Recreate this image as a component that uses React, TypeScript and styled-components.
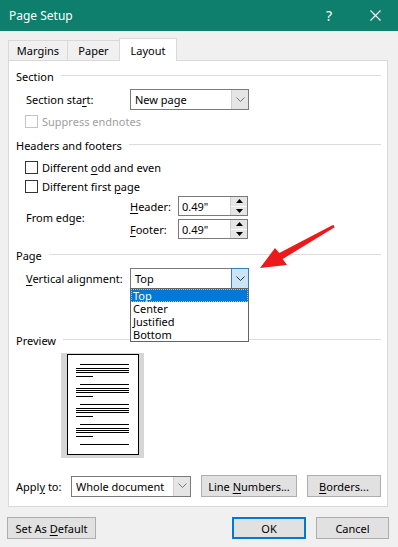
import React from 'react';
import styled, { createGlobalStyle, css } from 'styled-components';

const GlobalStyle = createGlobalStyle`
	html, body {
		margin: 0;
		padding: 0;
		background: #f0f0f0;
	}

	body {
		font-family: 'Noto Sans', 'Segoe UI', sans-serif;
		font-size: 11px;
		color: #000;
	}
`;

const Window = styled.div`
	position: relative;
	width: 398px;
	height: 547px;
	background: #f0f0f0;
	overflow: hidden;
	display: flex;
	flex-direction: column;
`;

const TitleBar = styled.div`
	height: 31px;
	flex: 0 0 31px;
	display: flex;
	align-items: center;
	padding-left: 9px;
	background: #0e7f6d;
	color: #fff;
	font-size: 12px;
`;

const Title = styled.div`
	flex: 1;
`;

const TitleButton = styled.div`
	width: 46px;
	height: 31px;
	display: flex;
	align-items: center;
	justify-content: center;
	font-size: 14px;
`;

const Body = styled.div`
	display: flex;
	flex-direction: column;
	padding: 7px 10px 0 8px;
`;

const Tabs = styled.div`
	display: flex;
	align-items: flex-end;
	height: 23px;
	margin-bottom: -1px;
	position: relative;
	z-index: 1;
`;

const Tab = styled.div<{ $active?: boolean; $width: number }>`
	box-sizing: border-box;
	width: ${(p) => p.$width}px;
	display: flex;
	align-items: center;
	justify-content: center;
	border: 1px solid #d9d9d9;
	border-bottom: none;
	& + & {
		margin-left: -1px;
	}

	${(p) => p.$active
		? css`
			height: 23px;
			background: #fff;
			padding-top: 1px;
		`
		: css`
			height: 21px;
			background: #f0f0f0;
			border-bottom: 1px solid #d9d9d9;
		`}
`;

const Panel = styled.div`
	display: flex;
	flex-direction: column;
	background: #fff;
	border: 1px solid #d9d9d9;
	padding: 0 6px 9px 7px;
`;

const GroupHeader = styled.div<{ $mt: number }>`
	display: flex;
	align-items: center;
	gap: 7px;
	height: 14px;
	margin-top: ${(p) => p.$mt}px;

	&::after {
		content: '';
		flex: 1;
		height: 1px;
		margin-top: -1px;
		background: #dcdcdc;
	}
`;

const Row = styled.div<{ $mt: number; $indent?: number; $height?: number }>`
	display: flex;
	align-items: center;
	height: ${(p) => p.$height ?? 21}px;
	margin-top: ${(p) => p.$mt}px;
	padding-left: ${(p) => p.$indent ?? 10}px;
`;

const Label = styled.div<{ $width: number }>`
	width: ${(p) => p.$width}px;
	flex: 0 0 auto;
	white-space: nowrap;
`;

const U = styled.span`
	text-decoration: underline;
	text-underline-offset: 2px;
`;

const CheckRow = styled.label<{ $mt: number; $disabled?: boolean }>`
	display: flex;
	align-items: center;
	gap: 4px;
	height: 13px;
	margin-top: ${(p) => p.$mt}px;
	padding-left: 9px;
	color: ${(p) => (p.$disabled ? '#a0a0a0' : '#000')};
`;

const CheckBox = styled.span<{ $disabled?: boolean }>`
	box-sizing: border-box;
	width: 13px;
	height: 13px;
	background: #fff;
	border: 1px solid ${(p) => (p.$disabled ? '#c4c4c4' : '#333')};
`;

const Combo = styled.div<{ $width: number }>`
	position: relative;
	box-sizing: border-box;
	width: ${(p) => p.$width}px;
	height: 21px;
	display: flex;
	background: #fff;
	border: 1px solid #7a7a7a;
`;

const ComboText = styled.div`
	flex: 1;
	display: flex;
	align-items: center;
	padding-left: 4px;
	white-space: nowrap;
`;

const ComboButton = styled.div<{ $focused?: boolean }>`
	box-sizing: border-box;
	width: 17px;
	display: flex;
	align-items: center;
	justify-content: center;
	color: ${(p) => (p.$focused ? '#333' : '#777')};

	${(p) => p.$focused
		? css`
			background: #cce4f7;
			border: 1px solid #3c7fb1;
			margin: -1px -1px -1px 0;
			width: 18px;
		`
		: css`
			background: #e5e5e5;
			border-left: 1px solid #cfcfcf;
		`}
`;

const DropList = styled.div`
	position: absolute;
	top: 100%;
	left: -1px;
	width: 119px;
	box-sizing: border-box;
	background: #fff;
	border: 1px solid #646464;
	z-index: 3;
`;

const DropItem = styled.div<{ $selected?: boolean }>`
	box-sizing: border-box;
	height: 13px;
	line-height: 13px;
	padding-left: 2px;
	overflow: hidden;

	${(p) => p.$selected && css`
		background: #0078d7;
		color: #fff;
		outline: 1px dotted #9cc8ee;
		outline-offset: -1px;
	`}
`;

const EdgeGrid = styled.div`
	display: grid;
	grid-template-columns: 104px 48px 70px;
	grid-template-rows: 20px 20px;
	row-gap: 3px;
	align-items: center;
	margin-top: 3px;
	padding-left: 10px;
`;

const EdgeLabel = styled.div`
	grid-row: 1 / span 2;
`;

const Spin = styled.div`
	box-sizing: border-box;
	width: 70px;
	height: 20px;
	display: flex;
	background: #fff;
	border: 1px solid #7a7a7a;
`;

const SpinText = styled.div`
	flex: 1;
	display: flex;
	align-items: center;
	padding-left: 3px;
`;

const SpinButtons = styled.div`
	width: 16px;
	display: flex;
	flex-direction: column;
	border-left: 1px solid #cfcfcf;
`;

const SpinHalf = styled.div`
	flex: 1;
	display: flex;
	align-items: center;
	justify-content: center;
	background: #e5e5e5;

	& + & {
		border-top: 1px solid #fff;
	}
`;

const PreviewBox = styled.div`
	box-sizing: border-box;
	width: 83px;
	height: 105px;
	margin: 6px 0 0 45px;
	padding: 1px 5px 0 6px;
	background: #d6d6d6;
`;

const PreviewPage = styled.div`
	box-sizing: border-box;
	width: 72px;
	height: 101px;
	background: #fff;
	border: 1px solid #000;
`;

const PushButton = styled.div<{ $width: number; $primary?: boolean }>`
	box-sizing: border-box;
	width: ${(p) => p.$width}px;
	height: 22px;
	display: flex;
	align-items: center;
	justify-content: center;
	white-space: pre;
	background: #e1e1e1;
	border: ${(p) => (p.$primary ? '2px solid #0078d7' : '1px solid #adadad')};
`;

const ApplyRow = styled.div`
	display: flex;
	align-items: center;
	gap: 10px;
	margin-top: 17px;
`;

const Footer = styled.div`
	display: flex;
	align-items: center;
	gap: 10px;
	margin: 10px -1px 0 -1px;
`;

const Spacer = styled.div`
	flex: 1;
`;

const ArrowOverlay = styled.svg`
	position: absolute;
	left: 255px;
	top: 220px;
	z-index: 5;
`;

const Chevron = () => (
	<svg width="9" height="6" viewBox="0 0 9 6">
		<polyline points="0.5,0.5 4.5,4.5 8.5,0.5" fill="none" stroke="currentColor" strokeWidth="1" />
	</svg>
);

const Triangle = ({ up }: { up?: boolean }) => (
	<svg width="7" height="4" viewBox="0 0 7 4">
		<polygon points={up ? '3.5,0 7,4 0,4' : '0,0 7,0 3.5,4'} fill="#000" />
	</svg>
);

const PageLines = () => {
	const groups = [0, 20, 40, 60];

	return (
		<svg width="70" height="99" viewBox="0 0 70 99">
			{groups.map((g) => (
				<g key={g} fill="#000">
					<rect x="12" y={9 + g} width="49" height="1" />
					<rect x="8" y={13 + g} width="53" height="1" />
					<rect x="8" y={15 + g} width="53" height="1" />
					<rect x="8" y={17 + g} width="53" height="1" />
					<rect x="8" y={21 + g} width="17" height="1" />
				</g>
			))}
			<rect x="12" y="89" width="49" height="1" fill="#000" />
		</svg>
	);
};

const App = () => {
	const alignments = ['Top', 'Center', 'Justified', 'Bottom'];

	return (
		<Window>
			<GlobalStyle />
			<TitleBar>
				<Title>Page Setup</Title>
				<TitleButton>?</TitleButton>
				<TitleButton>
					<svg width="11" height="11" viewBox="0 0 11 11">
						<path d="M0.5 0.5 L10.5 10.5 M10.5 0.5 L0.5 10.5" stroke="#fff" strokeWidth="1.1" />
					</svg>
				</TitleButton>
			</TitleBar>

			<Body>
				<Tabs>
					<Tab $width={60}>Margins</Tab>
					<Tab $width={53}>Paper</Tab>
					<Tab $width={58} $active>Layout</Tab>
				</Tabs>

				<Panel>
					<GroupHeader $mt={8}>Section</GroupHeader>
					<Row $mt={6}>
						<Label $width={104}>Section sta<U>r</U>t:</Label>
						<Combo $width={119}>
							<ComboText>New page</ComboText>
							<ComboButton><Chevron /></ComboButton>
						</Combo>
					</Row>
					<CheckRow $mt={5} $disabled>
						<CheckBox $disabled />
						Suppress endnotes
					</CheckRow>

					<GroupHeader $mt={10}>Headers and footers</GroupHeader>
					<CheckRow $mt={9}>
						<CheckBox />
						<span>Different <U>o</U>dd and even</span>
					</CheckRow>
					<CheckRow $mt={6}>
						<CheckBox />
						<span>Different first <U>p</U>age</span>
					</CheckRow>
					<EdgeGrid>
						<EdgeLabel>From edge:</EdgeLabel>
						<div><U>H</U>eader:</div>
						<Spin>
							<SpinText>0.49"</SpinText>
							<SpinButtons>
								<SpinHalf><Triangle up /></SpinHalf>
								<SpinHalf><Triangle /></SpinHalf>
							</SpinButtons>
						</Spin>
						<div><U>F</U>ooter:</div>
						<Spin>
							<SpinText>0.49"</SpinText>
							<SpinButtons>
								<SpinHalf><Triangle up /></SpinHalf>
								<SpinHalf><Triangle /></SpinHalf>
							</SpinButtons>
						</Spin>
					</EdgeGrid>

					<GroupHeader $mt={9}>Page</GroupHeader>
					<Row $mt={6}>
						<Label $width={104}><U>V</U>ertical alignment:</Label>
						<Combo $width={119}>
							<ComboText>Top</ComboText>
							<ComboButton $focused><Chevron /></ComboButton>
							<DropList>
								{alignments.map((item, i) => (
									<DropItem key={item} $selected={i === 0}>{item}</DropItem>
								))}
							</DropList>
						</Combo>
					</Row>

					<GroupHeader $mt={44}>Preview</GroupHeader>
					<PreviewBox>
						<PreviewPage>
							<PageLines />
						</PreviewPage>
					</PreviewBox>

					<ApplyRow>
						<Label $width={45}>Appl<U>y</U> to:</Label>
						<Combo $width={120}>
							<ComboText>Whole document</ComboText>
							<ComboButton><Chevron /></ComboButton>
						</Combo>
						<PushButton $width={96}><span>Line <U>N</U>umbers...</span></PushButton>
						<PushButton $width={74}><span><U>B</U>orders...</span></PushButton>
					</ApplyRow>
				</Panel>

				<Footer>
					<PushButton $width={89}><span>Set As <U>D</U>efault</span></PushButton>
					<Spacer />
					<PushButton $width={74} $primary>OK</PushButton>
					<PushButton $width={73}>Cancel</PushButton>
				</Footer>
			</Body>

			<ArrowOverlay width="85" height="52" viewBox="0 0 85 52">
				<polygon
					points="5,48 20,28 24.3,33 78.3,4.7 79.7,7.3 27.7,39 32,45"
					fill="#ec1a1a"
				/>
			</ArrowOverlay>
		</Window>
	);
};

export default App;
